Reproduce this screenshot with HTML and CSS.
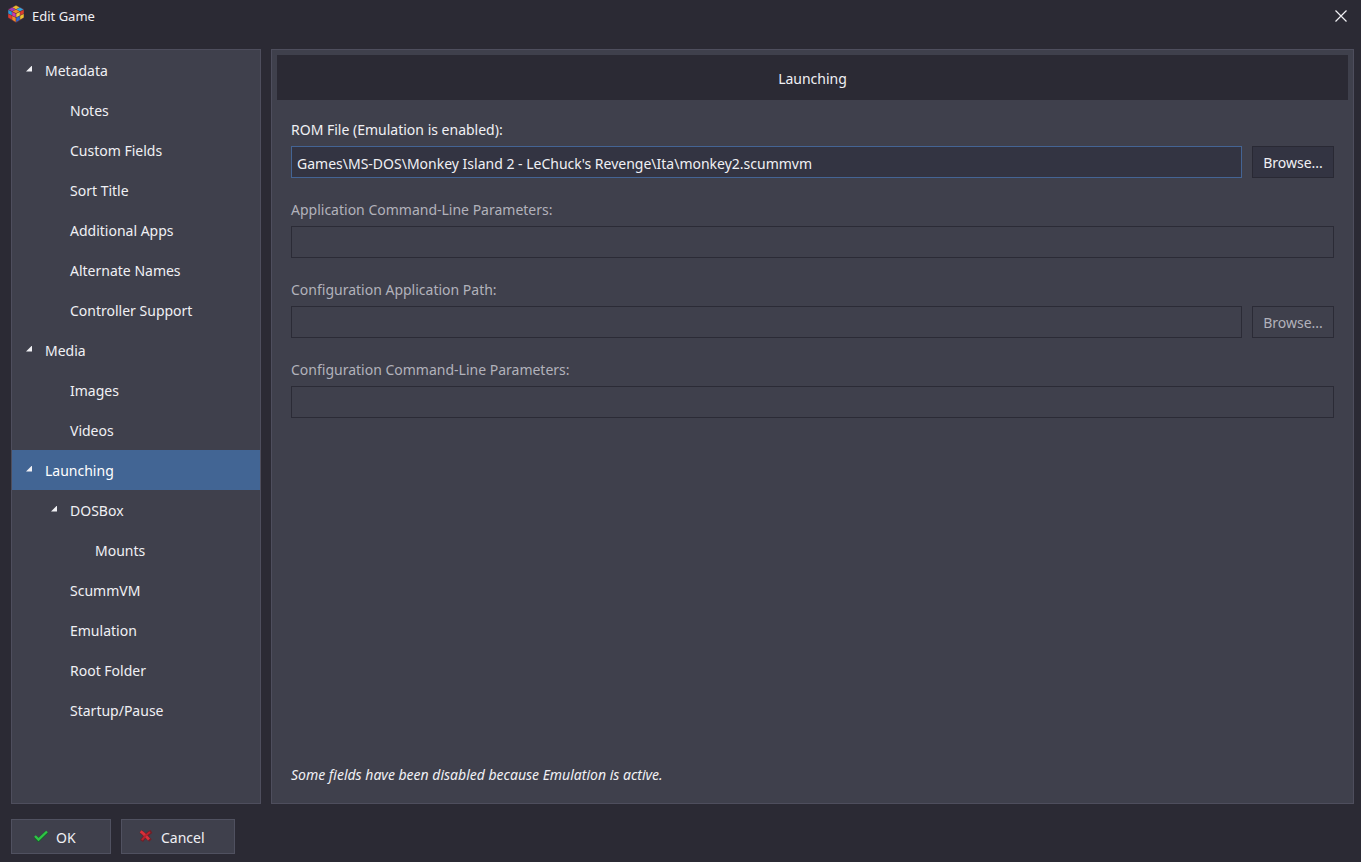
FILE: index.html
```html
<!DOCTYPE html>
<html lang="en">
<head>
<meta charset="utf-8">
<title>Edit Game</title>
<link rel="stylesheet" href="styles.css">
</head>
<body>
<header class="titlebar">
  <svg class="app-icon" viewBox="0 0 16 18" aria-hidden="true">
    <path fill="#5a3040" d="M8 0l8 4v9l-8 5-8-5V4z"/>
    <path fill="#e8b92c" d="M8 .5L11.500 2.400 8 4.200 4.500 2.400z"/>
    <path fill="#a53bb8" d="M4.200 2.500l3.500 1.900-3.500 1.800L.8 4.400z"/>
    <path fill="#35a4dc" d="M11.800 2.500l3.500 1.900-3.500 1.800-3.500-1.800z"/>
    <path fill="#ed8b24" d="M8 4.600l3.500 1.800L8 8.200 4.500 6.400z"/>
    <path fill="#249bd9" d="M.3 5l3.500 1.800v3.500L.3 8.500z"/>
    <path fill="#c93bb0" d="M4.200 7l3.500 1.800v3.500l-3.500-1.800z"/>
    <path fill="#e23c2e" d="M.3 9l3.500 1.800v3.700L.3 12.500z"/>
    <path fill="#f08a25" d="M4.200 11l3.500 1.800v4.200l-3.500-2.200z"/>
    <path fill="#f6cf35" d="M8.300 8.800L11.800 7v3.500l-3.500 1.800z"/>
    <path fill="#dc3b2b" d="M12.200 6.800L15.700 5v3.500l-3.500 1.800z"/>
    <path fill="#2d6bd0" d="M8.300 12.800l3.500-1.800v3.700l-3.500 2.300z"/>
    <path fill="#efc32e" d="M12.200 10.800L15.700 9v3.500l-3.500 2z"/>
  </svg>
  <h1 class="window-title">Edit Game</h1>
  <button class="close" type="button" aria-label="Close">
    <svg width="12" height="12" viewBox="0 0 12 12" aria-hidden="true"><path d="M.5.5l11 11M11.500.5l-11 11" fill="none" stroke="#f0f0f4" stroke-width="1.200"/></svg>
  </button>
</header>
<main class="workspace">
  <nav class="sidebar" aria-label="Sections">
    <ul class="tree">
      <li><a class="node parent" href="#metadata">Metadata</a>
        <ul class="tree">
          <li><a class="node level-2" href="#notes">Notes</a></li>
          <li><a class="node level-2" href="#custom-fields">Custom Fields</a></li>
          <li><a class="node level-2" href="#sort-title">Sort Title</a></li>
          <li><a class="node level-2" href="#additional-apps">Additional Apps</a></li>
          <li><a class="node level-2" href="#alternate-names">Alternate Names</a></li>
          <li><a class="node level-2" href="#controller-support">Controller Support</a></li>
        </ul>
      </li>
      <li><a class="node parent" href="#media">Media</a>
        <ul class="tree">
          <li><a class="node level-2" href="#images">Images</a></li>
          <li><a class="node level-2" href="#videos">Videos</a></li>
        </ul>
      </li>
      <li><a class="node parent selected" href="#launching" aria-current="page">Launching</a>
        <ul class="tree">
          <li><a class="node level-2 parent" href="#dosbox">DOSBox</a>
            <ul class="tree">
              <li><a class="node level-3" href="#mounts">Mounts</a></li>
            </ul>
          </li>
          <li><a class="node level-2" href="#scummvm">ScummVM</a></li>
          <li><a class="node level-2" href="#emulation">Emulation</a></li>
          <li><a class="node level-2" href="#root-folder">Root Folder</a></li>
          <li><a class="node level-2" href="#startup-pause">Startup/Pause</a></li>
        </ul>
      </li>
    </ul>
  </nav>
  <section class="panel" id="launching">
    <h2 class="panel-title">Launching</h2>
    <form class="fields">
      <div class="field">
        <label for="rom">ROM File (Emulation is enabled):</label>
        <div class="control">
          <input class="text" id="rom" type="text" value="Games\MS-DOS\Monkey Island 2 - LeChuck's Revenge\Ita\monkey2.scummvm">
          <button class="browse" type="button">Browse...</button>
        </div>
      </div>
      <div class="field disabled">
        <label for="app-params">Application Command-Line Parameters:</label>
        <div class="control"><input class="text" id="app-params" type="text" disabled></div>
      </div>
      <div class="field disabled">
        <label for="config-path">Configuration Application Path:</label>
        <div class="control">
          <input class="text" id="config-path" type="text" disabled>
          <button class="browse" type="button" disabled>Browse...</button>
        </div>
      </div>
      <div class="field disabled">
        <label for="config-params">Configuration Command-Line Parameters:</label>
        <div class="control"><input class="text" id="config-params" type="text" disabled></div>
      </div>
    </form>
    <p class="note">Some fields have been disabled because Emulation is active.</p>
  </section>
</main>
<footer class="actions">
  <button class="action ok" type="button">
    <svg width="14" height="12" viewBox="0 0 14 12" aria-hidden="true"><path d="M1 6.500l3.500 3.500L13 2" fill="none" stroke="#175f2b" stroke-width="3.600"/><path d="M1 6l3.500 3.500L13 1.500" fill="none" stroke="#2fc445" stroke-width="2.400"/></svg>
    OK
  </button>
  <button class="action cancel" type="button">
    <svg width="14" height="12" viewBox="0 0 14 12" aria-hidden="true"><path d="M1.500 1.500c3 2 6 5 10 9M12.500 1.500C8 4 5 7 2.500 11" fill="none" stroke="#6e2029" stroke-width="3.600"/><path d="M1.500 1.500c3 1.500 5 4 8.500 8" fill="none" stroke="#d8303a" stroke-width="2.800"/><path d="M11 2C7 4.500 5 7 3 10" fill="none" stroke="#b8222d" stroke-width="2"/></svg>
    Cancel
  </button>
</footer>
</body>
</html>
```
FILE: styles.css
```css
* { box-sizing: border-box; }

body {
  display: flex;
  flex-direction: column;
  min-height: 100vh;
  margin: 0;
  background: #2b2a34;
  color: #f0f0f4;
  font: 14px/20px "Noto Sans", "Open Sans", sans-serif;
}

button, input { font: inherit; color: inherit; }

.titlebar {
  display: flex;
  align-items: center;
  height: 32px;
  padding-left: 8px;
}

.app-icon { width: 16px; height: 18px; margin-bottom: 4px; }

.window-title {
  flex: 1;
  margin: 0 8px;
  font-size: 13px;
  font-weight: 400;
}

.close {
  display: grid;
  place-items: center;
  width: 40px;
  height: 30px;
  padding: 0;
  border: 0;
  background: none;
}

.workspace {
  display: flex;
  flex: 1;
  gap: 10px;
  padding: 17px 7px 15px 11px;
}

.sidebar, .panel {
  border: 1px solid #4e4e5d;
  background: #3f404c;
}

.sidebar { width: 250px; }

.tree { margin: 0; padding: 0; list-style: none; }

.node {
  display: flex;
  align-items: center;
  height: 40px;
  padding: 2px 0 0 33px;
  color: inherit;
  text-decoration: none;
}

.level-2 { padding-left: 58px; }
.level-3 { padding-left: 83px; }

.parent::before {
  content: "";
  width: 6px;
  height: 6px;
  margin: 0 13px 5px -19px;
  background: #f0f0f4;
  clip-path: polygon(100% 0, 100% 100%, 0 100%);
}

.selected { background: #426594; color: #fff; }

.panel {
  display: flex;
  flex: 1;
  flex-direction: column;
  padding: 5px;
}

.panel-title {
  margin: 0;
  padding: 14px 0 11px;
  background: #2b2a34;
  font-size: 14px;
  font-weight: 400;
  text-align: center;
}

.fields {
  display: flex;
  flex-direction: column;
  gap: 22px;
  padding: 20px 14px;
}

.field { display: flex; flex-direction: column; gap: 6px; }
.disabled { color: #b2b2bb; }
.control { display: flex; gap: 10px; }

.text {
  flex: 1;
  min-width: 0;
  height: 32px;
  padding: 2px 5px 0;
  border: 1px solid #446494;
  background: #333442;
}

.browse {
  width: 82px;
  height: 32px;
  padding: 2px 0 0;
  border: 1px solid #292934;
  background: #333442;
}

.text:disabled, .browse:disabled {
  border-color: #2b2b36;
  background: transparent;
}

.note { margin: auto 14px 13px; font-style: italic; }

.actions { display: flex; gap: 10px; padding: 0 11px 8px; }

.action {
  display: flex;
  align-items: center;
  height: 35px;
  gap: 8px;
  padding: 2px 22px 0;
  border: 1px solid #505160;
  background: #3f404c;
}

.action svg { margin-bottom: 4px; }
.ok { width: 100px; }
.cancel { width: 114px; padding-left: 17px; }
```
